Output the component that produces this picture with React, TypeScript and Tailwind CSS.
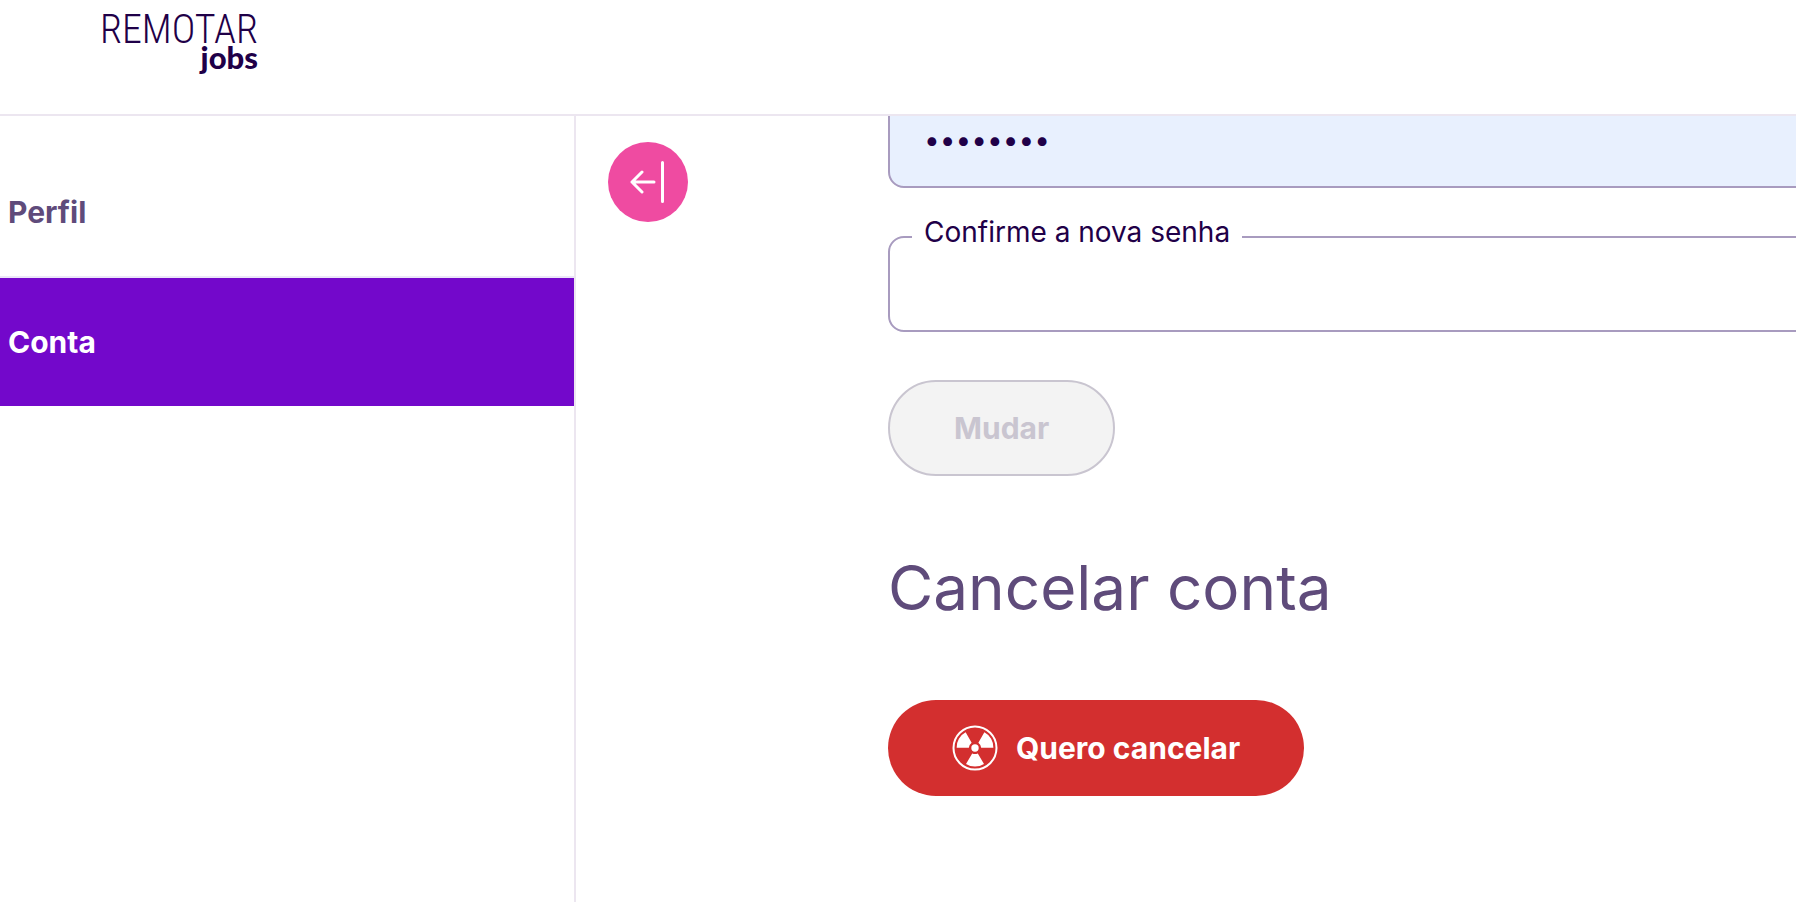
import { useState } from "react";
import clsx from "clsx";

const links = [
    { href: "#perfil", label: "Perfil", active: false },
    { href: "#conta", label: "Conta", active: true },
];

function Logo() {
    return (
        <a href="#inicio" aria-label="Remotar jobs" className="block text-[#1f0048]">
            <svg width="172" height="72" viewBox="0 0 172 72" fill="currentColor">
                <text x="170" y="35" textAnchor="end" className="font-['Roboto_Condensed','Liberation_Sans_Narrow',Roboto,sans-serif] text-[40px] font-light">
                    REMOTAR
                </text>
                <text x="170" y="61" textAnchor="end" className="font-['Lato',sans-serif] text-[31px] font-black">
                    jobs
                </text>
            </svg>
        </a>
    );
}

function CollapseIcon() {
    return (
        <svg
            width="36"
            height="44"
            viewBox="0 0 36 44"
            fill="none"
            stroke="currentColor"
            strokeWidth="3"
            strokeLinecap="round"
            strokeLinejoin="round"
        >
            <path d="M24 22H2M12 12L2 22l10 10M32.500 2.500v39" />
        </svg>
    );
}

function RadiationIcon() {
    return (
        <svg width="46" height="46" viewBox="-23 -23 46 46" fill="currentColor">
            <circle r="21.500" fill="none" stroke="currentColor" strokeWidth="2" />
            <circle r="3.700" />
            {[0, 120, 240].map((angle) => (
                <path
                    key={angle}
                    transform={`rotate(${angle})`}
                    d="M-2.800 5.500Q0 6.600 2.800 5.500L9 16Q5 18.600 0 18.600T-9 16Z"
                />
            ))}
        </svg>
    );
}

export default function App() {
    const [password, setPassword] = useState("remotar1");
    const [confirmation, setConfirmation] = useState("");

    return (
        <div className="flex h-screen flex-col overflow-hidden bg-white font-[Inter,sans-serif] text-[#1f0048]">
            <header className="flex h-[116px] shrink-0 items-start border-b-2 border-[#ece6f0] px-[88px] pt-2">
                <Logo />
            </header>

            <div className="flex min-h-0 flex-1">
                <nav className="w-[576px] shrink-0 border-r-2 border-[#ece6f0] pt-8">
                    {links.map((link) => (
                        <a
                            key={link.href}
                            href={link.href}
                            className={clsx(
                                "flex h-[130px] items-center border-b-2 px-2 text-[30px] font-bold",
                                link.active
                                    ? "border-white bg-[#7308cb] bg-clip-padding text-white"
                                    : "border-[#ece6f8] text-[#5f4b7b]"
                            )}
                        >
                            {link.label}
                        </a>
                    ))}
                </nav>

                <main className="flex min-w-0 flex-1 items-start overflow-hidden pl-8">
                    <button
                        type="button"
                        aria-label="Recolher menu"
                        className="mt-[26px] flex size-20 shrink-0 items-center justify-center rounded-full bg-[#ef4ba1] text-white"
                    >
                        <CollapseIcon />
                    </button>

                    <div className="-mt-6 -mr-8 ml-[200px] flex-1">
                        <form className="flex flex-col items-start gap-12">
                            <input
                                type="password"
                                aria-label="Nova senha"
                                value={password}
                                onChange={(e) => setPassword(e.target.value)}
                                className="h-24 w-full rounded-2xl border-2 border-[#a89bbf] bg-[#e8f0fe] px-[34px] text-[28px] outline-none"
                            />
                            <div className="relative w-full">
                                <input
                                    id="confirm"
                                    type="password"
                                    value={confirmation}
                                    onChange={(e) => setConfirmation(e.target.value)}
                                    className="block h-24 w-full rounded-2xl border-2 border-[#a89bbf] bg-white px-[34px] text-[28px] outline-none"
                                />
                                <label htmlFor="confirm" className="absolute -top-5 left-6 bg-white px-3 text-[28px] leading-8">
                                    Confirme a nova senha
                                </label>
                            </div>
                            <button
                                type="submit"
                                disabled
                                className="h-24 rounded-full border-2 border-[#c9c5d0] bg-[#f3f3f3] px-16 text-[30px] font-bold text-[#c9c5d0]"
                            >
                                Mudar
                            </button>
                        </form>

                        <h2 className="mt-16 text-[62px] leading-24 text-[#5f4b7b]">Cancelar conta</h2>

                        <button
                            type="button"
                            className="mt-16 flex h-24 items-center gap-[18px] rounded-full bg-[#d32f2f] px-16 text-[30px] font-bold text-white"
                        >
                            <RadiationIcon />
                            Quero cancelar
                        </button>
                    </div>
                </main>
            </div>
        </div>
    );
}
